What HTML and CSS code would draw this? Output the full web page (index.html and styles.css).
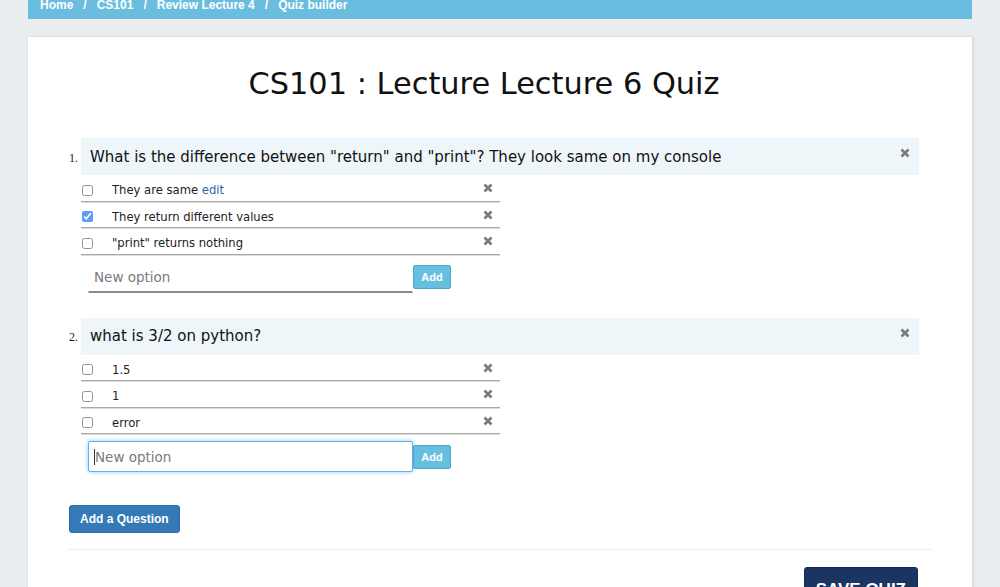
FILE: index.html
```html
<!DOCTYPE html>
<html lang="en">
<head>
<meta charset="utf-8">
<title>Quiz builder</title>
<link rel="stylesheet" href="styles.css">
</head>
<body>
<div class="page">
  <nav class="crumbs">
    <a href="#">Home</a><span class="sep">/</span><a href="#">CS101</a><span class="sep">/</span><a href="#">Review Lecture 4</a><span class="sep">/</span><span>Quiz builder</span>
  </nav>
  <main class="card">
    <h1 class="title">CS101 : Lecture Lecture 6 Quiz</h1>
    <ol class="questions">
      <li class="question">
        <div class="q-head">
          <span class="q-text">What is the difference between "return" and "print"? They look same on my console</span>
          <svg class="x-icon" viewBox="0 0 10 10"><path d="M1.5 1.5 L8.5 8.5 M8.5 1.5 L1.5 8.5"/></svg>
        </div>
        <ul class="options">
          <li class="option"><input type="checkbox" class="check"><span class="opt-text">They are same <a href="#" class="edit">edit</a></span><svg class="x-icon" viewBox="0 0 10 10"><path d="M1.5 1.5 L8.5 8.5 M8.5 1.5 L1.5 8.5"/></svg></li>
          <li class="option"><input type="checkbox" class="check" checked><span class="opt-text">They return different values</span><svg class="x-icon" viewBox="0 0 10 10"><path d="M1.5 1.5 L8.5 8.5 M8.5 1.5 L1.5 8.5"/></svg></li>
          <li class="option"><input type="checkbox" class="check"><span class="opt-text">"print" returns nothing</span><svg class="x-icon" viewBox="0 0 10 10"><path d="M1.5 1.5 L8.5 8.5 M8.5 1.5 L1.5 8.5"/></svg></li>
        </ul>
        <div class="new-option">
          <input class="opt-input" type="text" placeholder="New option">
          <button class="btn-add">Add</button>
        </div>
      </li>
      <li class="question">
        <div class="q-head">
          <span class="q-text">what is 3/2 on python?</span>
          <svg class="x-icon" viewBox="0 0 10 10"><path d="M1.5 1.5 L8.5 8.5 M8.5 1.5 L1.5 8.5"/></svg>
        </div>
        <ul class="options">
          <li class="option"><input type="checkbox" class="check"><span class="opt-text">1.5</span><svg class="x-icon" viewBox="0 0 10 10"><path d="M1.5 1.5 L8.5 8.5 M8.5 1.5 L1.5 8.5"/></svg></li>
          <li class="option"><input type="checkbox" class="check"><span class="opt-text">1</span><svg class="x-icon" viewBox="0 0 10 10"><path d="M1.5 1.5 L8.5 8.5 M8.5 1.5 L1.5 8.5"/></svg></li>
          <li class="option"><input type="checkbox" class="check"><span class="opt-text">error</span><svg class="x-icon" viewBox="0 0 10 10"><path d="M1.5 1.5 L8.5 8.5 M8.5 1.5 L1.5 8.5"/></svg></li>
        </ul>
        <div class="new-option">
          <span class="opt-input is-focused"><span class="caret"></span><span class="ph">New option</span></span>
          <button class="btn-add">Add</button>
        </div>
      </li>
    </ol>
    <button class="btn-primary">Add a Question</button>
    <hr class="divider">
    <div class="footer">
      <button class="btn-save">SAVE QUIZ</button>
    </div>
  </main>
</div>
</body>
</html>
```

FILE: styles.css
```css
html, body {
  margin: 0;
  padding: 0;
}

body {
  background: #e9edf0;
  font-family: "DejaVu Sans", Verdana, sans-serif;
  color: #222;
  overflow: hidden;
}

.page {
  margin: 0 28px;
}

.crumbs {
  height: 19px;
  background: #6bbde0;
  padding-left: 12px;
  font-family: "Liberation Sans", Arial, sans-serif;
  font-size: 12px;
  line-height: 11px;
  color: #fff;
  display: flex;
  align-items: flex-start;
  font-weight: bold;
}

.crumbs a {
  color: #fff;
  text-decoration: none;
}

.crumbs .sep {
  padding: 0 10px;
}

.card {
  margin-top: 18px;
  background: #fff;
  padding: 29px 40px 0;
  box-shadow: 1px 0 3px rgba(0, 0, 0, 0.12);
  min-height: 560px;
}

.title {
  margin: 0;
  font-size: 30.4px;
  line-height: 36px;
  font-weight: normal;
  text-align: center;
  color: #111;
  padding-right: 32px;
}

.questions {
  margin: 36px 0 33px;
  padding: 0 13px;
}

.question {
  margin-bottom: 25px;
}

.question::marker {
  font-family: "Liberation Serif", serif;
  font-size: 12px;
  color: #222;
}

.question:last-child {
  margin-bottom: 0;
}

.q-head {
  background: #eef6fa;
  height: 37px;
  padding: 0 9px;
  display: flex;
  align-items: center;
  justify-content: space-between;
  font-size: 15px;
  color: #111;
}

.q-head .x-icon {
  align-self: flex-start;
  margin-top: 10px;
}

.x-icon {
  width: 10px;
  height: 10px;
  flex: none;
}

.x-icon path {
  stroke: #7a7a7a;
  stroke-width: 2.6;
  fill: none;
}

.options {
  list-style: none;
  margin: 0;
  padding: 0;
  width: 419px;
}

.option {
  box-sizing: border-box;
  height: 26.5px;
  padding: 5px 7px 0 0;
  display: flex;
  align-items: center;
  border-bottom: 1px solid #a9a9a9;
  box-shadow: 0 1px 0 #dcdcdc;
  font-size: 11.6px;
  color: #222;
}

.option .x-icon {
  margin-top: -4px;
}

.check {
  width: 11px;
  height: 11px;
  margin: 0 19px 0 1px;
  flex: none;
  accent-color: #2f88f5;
  opacity: 0.8;
}

.opt-text {
  flex: 1;
}

.edit {
  color: #2a6aa8;
  text-decoration: none;
}

.new-option {
  display: flex;
  align-items: center;
  margin: 7px 0 0 7px;
}

.opt-input {
  box-sizing: border-box;
  width: 325px;
  height: 31px;
  border: 1px solid transparent;
  border-bottom: 2px solid #8a8a8a;
  padding: 0 5px;
  font-family: "DejaVu Sans", Verdana, sans-serif;
  font-size: 13.5px;
  color: #333;
  background: #fff;
  outline: none;
}

.opt-input::placeholder {
  color: #7a7a7a;
}

span.opt-input {
  display: flex;
  align-items: center;
}

.opt-input.is-focused {
  border: 1px solid #66afe9;
  border-radius: 2px;
  box-shadow: 0 0 4px rgba(102, 175, 233, 0.7);
}

.caret {
  width: 1px;
  height: 16px;
  background: #333;
}

.ph {
  color: #7a7a7a;
}

.btn-add {
  box-sizing: border-box;
  width: 38px;
  height: 24px;
  padding: 0;
  background: #67bfdf;
  border: 1px solid #46a9d0;
  border-radius: 2px;
  color: #fff;
  font-family: "Liberation Sans", Arial, sans-serif;
  font-size: 11px;
  font-weight: bold;
}

.btn-primary {
  box-sizing: border-box;
  height: 28px;
  margin-left: 1px;
  padding: 0 10px;
  background: #337ab7;
  border: 1px solid #2e6da4;
  border-radius: 3px;
  color: #fff;
  font-family: "Liberation Sans", Arial, sans-serif;
  font-size: 12px;
  font-weight: bold;
}

.divider {
  margin: 16px 0 17px;
  border: 0;
  border-top: 1px solid #eceeef;
}

.footer {
  display: flex;
  justify-content: flex-end;
  padding-right: 14px;
}

.btn-save {
  box-sizing: border-box;
  height: 40px;
  padding: 6px 11px 0;
  align-self: flex-start;
  background: #1a3562;
  border: 1px solid #122a52;
  border-radius: 3px;
  color: #fff;
  font-family: "Liberation Sans", Arial, sans-serif;
  font-size: 17px;
  font-weight: bold;
  line-height: 20px;
}
```
